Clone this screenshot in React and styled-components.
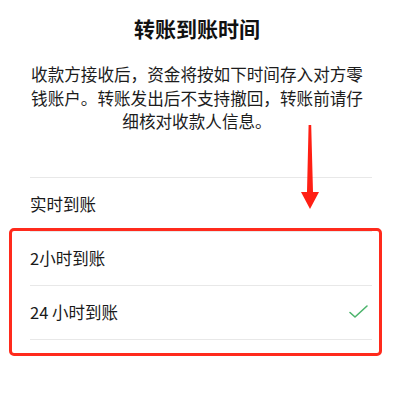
import React from "react";
import styled, { createGlobalStyle } from "styled-components";

const GlobalStyle = createGlobalStyle`
    html, body {
        margin: 0;
        padding: 0;
        background: #ffffff;
    }
    body {
        font-family: "Noto Sans CJK SC", "Noto Sans", sans-serif;
        color: #191919;
    }
`;

const Sheet = styled.div`
    position: relative;
    width: 394px;
    height: 399px;
    overflow: hidden;
    background: #fff;
`;

const Title = styled.h1`
    margin: 0;
    padding-top: 13px;
    font-size: 21px;
    line-height: 30px;
    font-weight: 600;
    text-align: center;
    color: #111;
`;

const Notice = styled.p`
    margin: 20px 0 0;
    padding: 0 30px;
    font-size: 16.6px;
    line-height: 23.5px;
    text-align: center;
    color: #1c1c1c;
`;

const List = styled.div`
    margin: 43px 22px 0 30px;
    border-top: 1px solid #e8e8e8;
`;

const Row = styled.div`
    display: flex;
    align-items: center;
    justify-content: space-between;
    height: 53px;
    border-bottom: 1px solid #e8e8e8;
    font-size: 16.5px;
    color: #1a1a1a;
`;

// red annotation box drawn over the last two rows
const Highlight = styled.div`
    position: relative;
    &::after {
        content: "";
        position: absolute;
        top: -4px;
        bottom: -16px;
        left: -21px;
        right: -10px;
        border: 3px solid #ff2a1c;
        border-radius: 5px;
        pointer-events: none;
    }
`;

const Arrow = styled.svg`
    position: absolute;
    left: 300px;
    top: 124px;
`;

const Check = () => (
    <svg width="22" height="16" viewBox="0 0 22 16" style={{ marginRight: 2 }}>
        <path d="M2 8.5 L7 13 L19 2" fill="none" stroke="#4cb46c" strokeWidth="1.6" strokeLinecap="round" strokeLinejoin="round" />
    </svg>
);

const options = [
    { label: "2小时到账" },
    { label: "24 小时到账", selected: true },
];

export default function App() {
    return (
        <Sheet>
            <GlobalStyle />
            <Title>转账到账时间</Title>
            <Notice>
                收款方接收后，资金将按如下时间存入对方零钱账户。转账发出后不支持撤回，转账前请仔细核对收款人信息。
            </Notice>
            <List>
                <Row>实时到账</Row>
                <Highlight>
                    {options.map((o) => (
                        <Row key={o.label}>
                            <span>{o.label}</span>
                            {o.selected && <Check />}
                        </Row>
                    ))}
                </Highlight>
            </List>
            <Arrow width="20" height="86" viewBox="0 0 20 86">
                <path d="M8.6 1 L11.2 1 L13 68 L19 68 L10 85 L1 68 L7 68 Z" fill="#ff1f14" />
            </Arrow>
        </Sheet>
    );
}
